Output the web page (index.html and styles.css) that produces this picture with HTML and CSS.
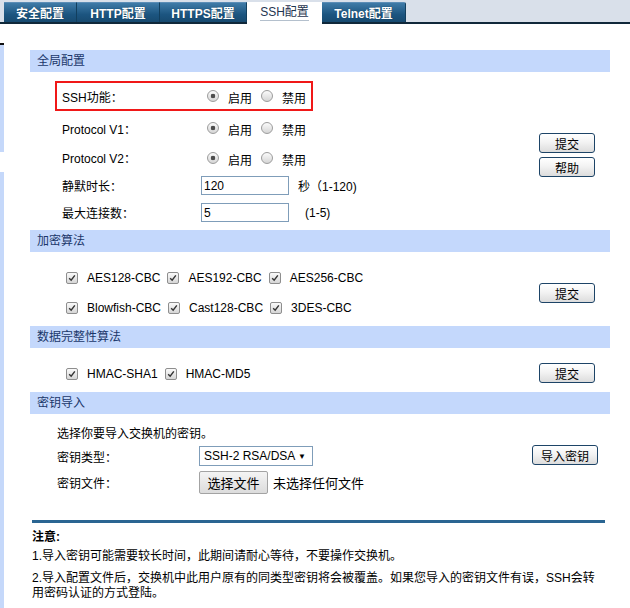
FILE: index.html
```html
<!DOCTYPE html>
<html lang="zh-CN">
<head>
<meta charset="utf-8">
<title>SSH配置</title>
<link rel="stylesheet" href="styles.css">
</head>
<body>
<div class="topbar">
  <div class="tab w1">安全配置</div>
  <div class="tab w2">HTTP配置</div>
  <div class="tab w3">HTTPS配置</div>
  <div class="tab active w4"><span>SSH配置</span></div>
  <div class="tab w5">Telnet配置</div>
</div>
<div class="page">
  <div class="edge">
    <div class="e-white1"></div>
    <div class="e-black"></div>
    <div class="e-blue1"></div>
    <div class="e-white2"></div>
    <div class="e-blue2"></div>
  </div>
  <div class="main">
    <div class="hdr first">全局配置</div>
    <div class="sec">
      <div class="rows">
        <div class="redbox">
          <div class="row r30">
            <span class="lbl">SSH功能：</span>
            <span class="radio on"></span><span class="opt">启用</span>
            <span class="radio"></span><span class="opt">禁用</span>
          </div>
        </div>
        <div class="row ind r30 mt2">
          <span class="lbl">Protocol V1：</span>
          <span class="radio on"></span><span class="opt">启用</span>
          <span class="radio"></span><span class="opt">禁用</span>
        </div>
        <div class="row ind r29">
          <span class="lbl">Protocol V2：</span>
          <span class="radio on"></span><span class="opt">启用</span>
          <span class="radio"></span><span class="opt">禁用</span>
        </div>
        <div class="row ind r27">
          <span class="lbl lbl-in">静默时长：</span>
          <input class="txt" type="text" value="120">
          <span class="unit">秒（1-120)</span>
        </div>
        <div class="row ind r27">
          <span class="lbl lbl-in">最大连接数：</span>
          <input class="txt" type="text" value="5">
          <span class="unit unit2">(1-5)</span>
        </div>
      </div>
      <div class="btns p61">
        <button class="btn">提交</button>
        <button class="btn">帮助</button>
      </div>
    </div>

    <div class="hdr mt4">加密算法</div>
    <div class="sec">
      <div class="rows pt11">
        <div class="row cbrow r30">
          <span class="cb"><svg viewBox="0 0 12 12" width="12" height="12"><path d="M2.6 6.2 L5 8.6 L9.4 2.8" fill="none" stroke="#333" stroke-width="1.7"/></svg></span><span class="cbt">AES128-CBC</span>
          <span class="cb"><svg viewBox="0 0 12 12" width="12" height="12"><path d="M2.6 6.2 L5 8.6 L9.4 2.8" fill="none" stroke="#333" stroke-width="1.7"/></svg></span><span class="cbt">AES192-CBC</span>
          <span class="cb"><svg viewBox="0 0 12 12" width="12" height="12"><path d="M2.6 6.2 L5 8.6 L9.4 2.8" fill="none" stroke="#333" stroke-width="1.7"/></svg></span><span class="cbt">AES256-CBC</span>
        </div>
        <div class="row cbrow r30">
          <span class="cb"><svg viewBox="0 0 12 12" width="12" height="12"><path d="M2.6 6.2 L5 8.6 L9.4 2.8" fill="none" stroke="#333" stroke-width="1.7"/></svg></span><span class="cbt">Blowfish-CBC</span>
          <span class="cb"><svg viewBox="0 0 12 12" width="12" height="12"><path d="M2.6 6.2 L5 8.6 L9.4 2.8" fill="none" stroke="#333" stroke-width="1.7"/></svg></span><span class="cbt">Cast128-CBC</span>
          <span class="cb"><svg viewBox="0 0 12 12" width="12" height="12"><path d="M2.6 6.2 L5 8.6 L9.4 2.8" fill="none" stroke="#333" stroke-width="1.7"/></svg></span><span class="cbt">3DES-CBC</span>
        </div>
      </div>
      <div class="btns p31">
        <button class="btn">提交</button>
      </div>
    </div>

    <div class="hdr mt3">数据完整性算法</div>
    <div class="sec">
      <div class="rows pt11">
        <div class="row cbrow r30">
          <span class="cb"><svg viewBox="0 0 12 12" width="12" height="12"><path d="M2.6 6.2 L5 8.6 L9.4 2.8" fill="none" stroke="#333" stroke-width="1.7"/></svg></span><span class="cbt">HMAC-SHA1</span>
          <span class="cb"><svg viewBox="0 0 12 12" width="12" height="12"><path d="M2.6 6.2 L5 8.6 L9.4 2.8" fill="none" stroke="#333" stroke-width="1.7"/></svg></span><span class="cbt">HMAC-MD5</span>
        </div>
      </div>
      <div class="btns p15">
        <button class="btn">提交</button>
      </div>
    </div>

    <div class="hdr mt3">密钥导入</div>
    <div class="sec">
      <div class="rows pt6">
        <div class="row kind r24">选择你要导入交换机的密钥。</div>
        <div class="row kind r24">
          <span class="lbl lbl-key">密钥类型：</span>
          <div class="select"><span>SSH-2 RSA/DSA</span><span class="arrow">▼</span></div>
        </div>
        <div class="row kind r28">
          <span class="lbl lbl-key">密钥文件：</span>
          <button class="filebtn">选择文件</button>
          <span class="nofile">未选择任何文件</span>
        </div>
      </div>
      <div class="btns p31 pr12">
        <button class="btn wide">导入密钥</button>
      </div>
    </div>

    <div class="rule"></div>
    <div class="notes">
      <div class="note-title">注意:</div>
      <div class="note n1">1.导入密钥可能需要较长时间，此期间请耐心等待，不要操作交换机。</div>
      <div class="note n2">2.导入配置文件后，交换机中此用户原有的同类型密钥将会被覆盖。如果您导入的密钥文件有误，SSH会转用密码认证的方式登陆。</div>
    </div>
  </div>
</div>
</body>
</html>
```

FILE: styles.css
```css
html, body {
  margin: 0;
  padding: 0;
}
body {
  font-family: "Liberation Sans", Arial, "Noto Sans CJK SC", sans-serif;
  font-size: 12px;
  color: #000;
  background: #fff;
  width: 630px;
  height: 608px;
  overflow: hidden;
}

/* top tab bar */
.topbar {
  height: 22px;
  background: #d9e0ea;
  border-bottom: 2px solid #10283a;
  display: flex;
  align-items: flex-end;
  padding-left: 4px;
}
.tab {
  height: 20px;
  box-sizing: border-box;
  display: flex;
  align-items: center;
  justify-content: center;
  color: #fff;
  font-weight: bold;
  font-size: 12px;
  background: linear-gradient(#3f7ba8, #1c5580 60%, #174a70);
  border-right: 1px solid #123f5e;
  border-top: 1px solid #5b8db6;
  text-shadow: 0 0 1px #0b2c44;
  white-space: nowrap;
}
.w1 { width: 73px; }
.w2 { width: 83px; }
.w3 { width: 87px; }
.w4 { width: 75px; }
.w5 { width: 84px; border-top-right-radius: 2px; }
.tab.active {
  height: 22px;
  margin-bottom: -2px;
  background: #fff;
  color: #1f3550;
  font-weight: normal;
  text-shadow: none;
  border-top: none;
  border-right: none;
}
.tab.active span {
  border-bottom: 1px solid #b4c0cd;
  line-height: 15px;
}

/* page */
.page {
  display: flex;
  height: 584px;
}
.edge {
  width: 4px;
  flex: none;
  display: flex;
  flex-direction: column;
}
.e-white1 { height: 19px; }
.e-black { height: 2px; background: #111; }
.e-blue1 { height: 107px; background: #c5d8fa; }
.e-white2 { height: 20px; }
.e-blue2 { flex: 1; background: #c5d8fa; }

.main {
  flex: 1;
  padding: 0 20px 0 26px;
}

.hdr {
  height: 22px;
  line-height: 22px;
  background: #c4d8fc;
  color: #1b376a;
  padding-left: 7px;
}
.hdr.first { margin-top: 26px; }
.mt4 { margin-top: 4px; }
.mt3 { margin-top: 3px; }
.mt2 { margin-top: 2px; }

.sec {
  display: flex;
}
.rows {
  flex: 1;
}
.pt11 { padding-top: 11px; }
.pt6 { padding-top: 6px; }

.btns {
  display: flex;
  flex-direction: column;
  gap: 4px;
  padding-right: 15px;
}
.p61 { padding-top: 61px; }
.p31 { padding-top: 31px; }
.p15 { padding-top: 15px; }
.pr12 { padding-right: 12px; }

.btn {
  width: 56px;
  height: 20px;
  box-sizing: border-box;
  border: 1px solid #1d4467;
  border-radius: 3px;
  background: linear-gradient(#ffffff, #f3f3f3 45%, #dcdcdc);
  font-family: "Noto Sans CJK SC", sans-serif;
  font-size: 12px;
  color: #000;
  padding: 0;
  display: flex;
  align-items: center;
  justify-content: center;
}
.btn.wide { width: 66px; }

.redbox {
  margin-top: 9px;
  margin-left: 25px;
  width: 258px;
  height: 30px;
  box-sizing: border-box;
  border: 2px solid #f01818;
  padding-left: 5px;
}
.redbox .row { height: 26px; }

.row {
  display: flex;
  align-items: center;
  white-space: nowrap;
}
.ind { padding-left: 32px; }
.r30 { height: 30px; }
.r29 { height: 29px; }
.r28 { height: 28px; }
.r27 { height: 27px; }
.r24 { height: 24px; }

.lbl {
  width: 145px;
  flex: none;
}
.lbl-in { width: 139px; }

.radio {
  width: 12px;
  height: 12px;
  box-sizing: border-box;
  border-radius: 50%;
  border: 1px solid #9c9c9c;
  background: linear-gradient(#fbfbfb, #d5d5d5);
  flex: none;
  margin-right: 9px;
}
.radio.on {
  background: radial-gradient(circle, #4d4d4d 0, #4d4d4d 2px, transparent 2.6px), linear-gradient(#fbfbfb, #d5d5d5);
}
.opt {
  flex: none;
  margin-right: 9px;
  padding-top: 3px;
}
.opt:last-child { margin-right: 0; }

.txt {
  width: 88px;
  height: 19px;
  box-sizing: border-box;
  border: 1px solid #7f9db9;
  padding: 0 2px;
  font-family: "Liberation Sans", Arial, sans-serif;
  font-size: 12px;
  color: #000;
  margin: 0;
  flex: none;
}
.unit { margin-left: 9px; }
.unit2 { margin-left: 16px; }

.cbrow { padding-left: 36px; }
.cb {
  width: 12px;
  height: 12px;
  box-sizing: border-box;
  border: 1px solid #8e8e8e;
  border-radius: 2px;
  background: linear-gradient(#fafafa, #d6d6d6);
  display: flex;
  align-items: center;
  justify-content: center;
  flex: none;
  margin-right: 9px;
  margin-left: 7px;
}
.cbrow .cb:first-child { margin-left: 0; }
.cb svg { width: 10px; height: 10px; }

.kind { padding-left: 27px; }
.lbl-key { width: 142px; }
.select {
  width: 114px;
  height: 20px;
  box-sizing: border-box;
  border: 1px solid #7f9db9;
  display: flex;
  align-items: center;
  justify-content: space-between;
  padding: 0 6px 0 4px;
  flex: none;
}
.arrow { font-size: 8px; }
.filebtn {
  width: 69px;
  height: 23px;
  box-sizing: border-box;
  border: 1px solid #a3a3a3;
  border-radius: 2px;
  background: linear-gradient(#f4f4f4, #dcdcdc);
  font-family: "Noto Sans CJK SC", sans-serif;
  font-size: 13px;
  color: #000;
  padding: 0;
  margin: 0;
  flex: none;
}
.nofile {
  font-size: 13px;
  margin-left: 5px;
}

.rule {
  margin: 24px 5px 0 2px;
  height: 3px;
  background: #2a6592;
}
.notes {
  padding-left: 2px;
  padding-right: 5px;
}
.note-title {
  font-weight: bold;
  height: 18px;
  line-height: 18px;
  margin-top: 5px;
}
.note.n1 {
  height: 20px;
  line-height: 20px;
}
.note.n2 {
  margin-top: 5px;
  line-height: 15px;
}
```
